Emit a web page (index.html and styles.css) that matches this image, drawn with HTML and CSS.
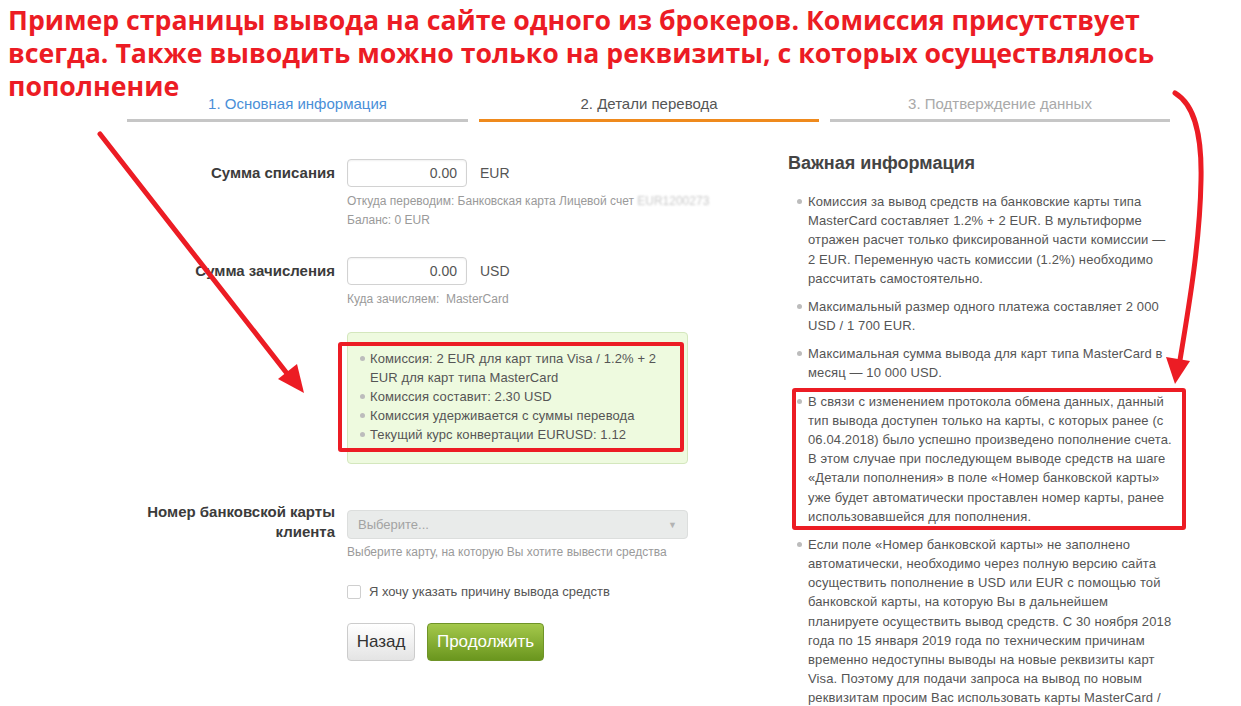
FILE: index.html
```html
<!DOCTYPE html>
<html lang="ru">
<head>
<meta charset="utf-8">
<title>Вывод средств</title>
<link rel="stylesheet" href="styles.css">
</head>
<body>
<div class="page">
  <nav class="steps">
    <div class="step step-done">1. Основная информация</div>
    <div class="step step-active">2. Детали перевода</div>
    <div class="step step-next">3. Подтверждение данных</div>
  </nav>

  <div class="content">
    <form class="form">
      <div class="row">
        <div class="label">Сумма списания</div>
        <div class="field">
          <div class="amount"><span class="input">0.00</span><span class="unit">EUR</span></div>
          <p class="help help-nowrap">Откуда переводим: Банковская карта Лицевой счет <span class="blur">EUR1200273</span><br>Баланс: 0 EUR</p>
        </div>
      </div>

      <div class="row row-second">
        <div class="label">Сумма зачисления</div>
        <div class="field">
          <div class="amount"><span class="input">0.00</span><span class="unit">USD</span></div>
          <p class="help">Куда зачисляем:&nbsp; MasterCard</p>
        </div>
      </div>

      <div class="row row-notice">
        <div></div>
        <div class="notice">
          <ul class="dots">
            <li>Комиссия: 2 EUR для карт типа Visa / 1.2% + 2 EUR для карт типа MasterCard</li>
            <li>Комиссия составит: 2.30 USD</li>
            <li>Комиссия удерживается с суммы перевода</li>
            <li>Текущий курс конвертации EURUSD: 1.12</li>
          </ul>
        </div>
      </div>

      <div class="row row-card">
        <div class="label label-multi">Номер банковской карты клиента</div>
        <div class="field field-card">
          <div class="select"><span>Выберите...</span><span class="caret">▼</span></div>
          <p class="help help-card">Выберите карту, на которую Вы хотите вывести средства</p>
        </div>
      </div>

      <div class="row row-check">
        <div></div>
        <label class="check"><span class="box"></span>Я хочу указать причину вывода средств</label>
      </div>

      <div class="row row-buttons">
        <div></div>
        <div class="buttons">
          <button type="button" class="btn btn-back">Назад</button>
          <button type="button" class="btn btn-next">Продолжить</button>
        </div>
      </div>
    </form>

    <aside class="info">
      <h2 class="info-title">Важная информация</h2>
      <ul class="dots info-list">
        <li>Комиссия за вывод средств на банковские карты типа MasterCard составляет 1.2% + 2 EUR. В мультиформе отражен расчет только фиксированной части комиссии — 2 EUR. Переменную часть комиссии (1.2%) необходимо рассчитать самостоятельно.</li>
        <li>Максимальный размер одного платежа составляет 2 000 USD / 1 700 EUR.</li>
        <li>Максимальная сумма вывода для карт типа MasterCard в месяц — 10 000 USD.</li>
        <li>В связи с изменением протокола обмена данных, данный тип вывода доступен только на карты, с которых ранее (с 06.04.2018) было успешно произведено пополнение счета. В этом случае при последующем выводе средств на шаге «Детали пополнения» в поле «Номер банковской карты» уже будет автоматически проставлен номер карты, ранее использовавшейся для пополнения.</li>
        <li>Если поле «Номер банковской карты» не заполнено автоматически, необходимо через полную версию сайта осуществить пополнение в USD или EUR с помощью той банковской карты, на которую Вы в дальнейшем планируете осуществить вывод средств. С 30 ноября 2018 года по 15 января 2019 года по техническим причинам временно недоступны выводы на новые реквизиты карт Visa. Поэтому для подачи запроса на вывод по новым реквизитам просим Вас использовать карты MasterCard / Maestro.</li>
      </ul>
    </aside>
  </div>

  <h1 class="note">Пример страницы вывода на сайте одного из брокеров. Комиссия присутствует<br>всегда. Также выводить можно только на реквизиты, с которых осуществлялось<br>пополнение</h1>

  <svg class="marks" width="1241" height="706" viewBox="0 0 1241 706">
    <g fill="none" stroke="#ec1c24" stroke-width="5" stroke-linecap="round">
      <line x1="100" y1="134" x2="289" y2="376"/>
      <path d="M1175,93 C1195,105 1202,135 1201,180 C1200,240 1190,300 1180,360"/>
    </g>
    <g fill="#ec1c24">
      <polygon points="278,379 297,364 304,393"/>
      <polygon points="1166,357 1190,361 1175,384"/>
    </g>
    <g fill="none" stroke="#ec1c24" stroke-width="4">
      <rect x="340" y="344" width="342" height="106" rx="1"/>
      <rect x="794" y="390" width="390" height="138" rx="1"/>
    </g>
  </svg>
</div>
</body>
</html>
```

FILE: styles.css
```css
* { box-sizing: border-box; }

html, body {
  margin: 0;
  padding: 0;
  background: #ffffff;
}

body {
  font-family: "Liberation Sans", Arial, sans-serif;
  color: #555555;
  overflow: hidden;
}

.page {
  position: relative;
  width: 1241px;
  height: 706px;
  padding: 95px 0 0 127px;
  overflow: hidden;
}

/* steps */
.steps {
  display: grid;
  grid-template-columns: 341px 340px 340px;
  column-gap: 11px;
  width: 1044px;
}

.step {
  font-size: 15px;
  line-height: 18px;
  text-align: center;
  padding-bottom: 6px;
  border-bottom: 3px solid #c6c6c6;
  color: #a9a9a9;
}

.step-done { color: #4a8fd8; }
.step-active { color: #555555; border-bottom-color: #ef8a1d; }
.step-next { color: #a9a9a9; }

/* layout */
.content {
  display: flex;
  gap: 100px;
  align-items: flex-start;
}

.form {
  flex: none;
  width: 561px;
  margin: 37px 0 0;
}

.row {
  display: grid;
  grid-template-columns: 208px 341px;
  column-gap: 12px;
  align-items: start;
}

.label {
  font-size: 15px;
  font-weight: bold;
  color: #3b3b3b;
  text-align: right;
  line-height: 28px;
}

.label-multi {
  line-height: 20px;
}

.amount {
  display: flex;
  align-items: center;
  gap: 13px;
}

.input {
  display: block;
  width: 120px;
  height: 28px;
  border: 1px solid #d2d2d2;
  border-radius: 4px;
  text-align: right;
  padding: 0 9px;
  font-size: 14px;
  line-height: 26px;
  color: #555555;
  box-shadow: inset 0 1px 2px rgba(0,0,0,0.06);
}

.unit {
  font-size: 14px;
  color: #555555;
}

.help {
  margin: 5px 0 0;
  font-size: 12px;
  line-height: 19px;
  color: #9a9a9a;
}

.help-nowrap {
  white-space: nowrap;
}

.blur {
  color: #c9c9c9;
  filter: blur(0.8px);
}

.row-second { margin-top: 27px; }

.row-notice { margin-top: 23px; }

.notice {
  background: #eefadf;
  border: 1px solid #d4e7bd;
  border-radius: 4px;
  padding: 16px 14px 19px 12px;
  height: 132px;
}

.dots {
  list-style: none;
  margin: 0;
  padding: 0;
}

.dots li {
  position: relative;
  padding-left: 10px;
  font-size: 13px;
  line-height: 19px;
  letter-spacing: 0.1px;
  color: #555555;
}

.dots li::before {
  content: "";
  position: absolute;
  left: 0;
  top: 7px;
  width: 5px;
  height: 5px;
  border-radius: 50%;
  background: #bcbcbc;
}

.row-card { margin-top: 38px; }

.field-card { padding-top: 8px; }

.select {
  display: flex;
  justify-content: space-between;
  align-items: center;
  height: 29px;
  background: #e9ebea;
  border: 1px solid #dcdedd;
  border-radius: 4px;
  padding: 0 10px 0 10px;
  font-size: 13px;
  color: #a3a3a3;
}

.caret {
  font-size: 9px;
  color: #b3b3b3;
}

.help-card { margin-top: 4px; }

.row-check { margin-top: 20px; }

.check {
  display: flex;
  align-items: center;
  gap: 8px;
  font-size: 13px;
  line-height: 20px;
  color: #555555;
}

.box {
  display: inline-block;
  width: 14px;
  height: 14px;
  border: 1px solid #cfcfcf;
  border-radius: 2px;
  background: #ffffff;
}

.row-buttons { margin-top: 21px; }

.buttons {
  display: flex;
  gap: 12px;
}

.btn {
  height: 38px;
  border-radius: 4px;
  font-family: "Liberation Sans", Arial, sans-serif;
  font-size: 17px;
  padding: 0;
  cursor: pointer;
}

.btn-back {
  width: 68px;
  background: linear-gradient(#ffffff, #e4e4e4);
  border: 1px solid #cccccc;
  color: #333333;
}

.btn-next {
  width: 117px;
  background: linear-gradient(#a4c84b, #6a961e);
  border: 1px solid #6f9428;
  color: #ffffff;
}

/* info column */
.info {
  flex: none;
  width: 400px;
  padding-top: 30px;
}

.info-title {
  margin: 0 0 18px;
  font-size: 18px;
  line-height: 22px;
  font-weight: bold;
  color: #444444;
}

.info-list {
  width: 386px;
  padding-left: 9px;
}

.info-list li {
  line-height: 19.2px;
  padding-left: 11px;
  margin-bottom: 8.9px;
  letter-spacing: 0.12px;
}

/* annotations */
.note {
  position: absolute;
  left: 8px;
  top: 3px;
  margin: 0;
  font-family: "Open Sans", "Liberation Sans", sans-serif;
  font-weight: bold;
  font-size: 26.7px;
  line-height: 33px;
  color: #ec1c24;
  white-space: nowrap;
}

.marks {
  position: absolute;
  left: 0;
  top: 0;
  pointer-events: none;
}
```
